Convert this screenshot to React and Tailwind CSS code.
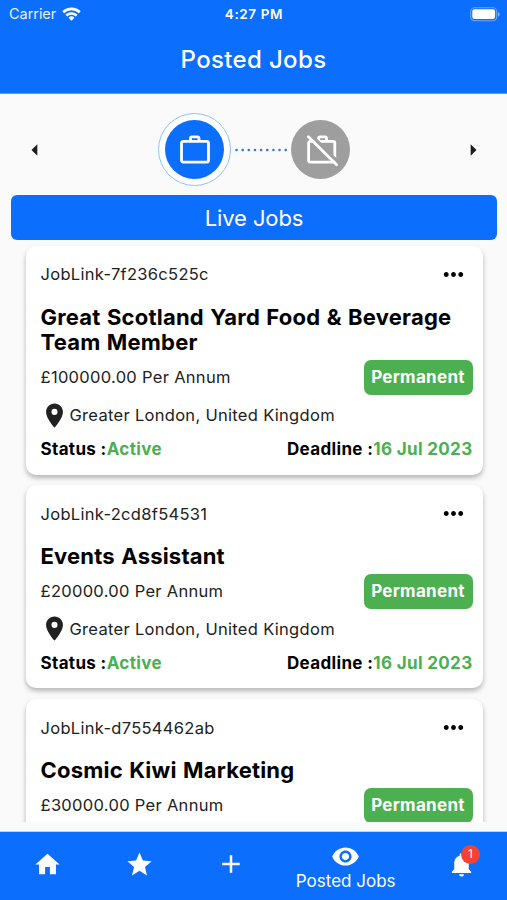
import {
  MdAdd,
  MdArrowLeft,
  MdArrowRight,
  MdHome,
  MdLocationOn,
  MdMoreHoriz,
  MdNotifications,
  MdStar,
  MdVisibility,
} from 'react-icons/md';

const jobs = [
  {
    id: 'JobLink-7f236c525c',
    title: 'Great Scotland Yard Food & Beverage Team Member',
    salary: '£100000.00 Per Annum',
    type: 'Permanent',
    location: 'Greater London, United Kingdom',
    status: 'Active',
    deadline: '16 Jul 2023',
  },
  {
    id: 'JobLink-2cd8f54531',
    title: 'Events Assistant',
    salary: '£20000.00 Per Annum',
    type: 'Permanent',
    location: 'Greater London, United Kingdom',
    status: 'Active',
    deadline: '16 Jul 2023',
  },
  {
    id: 'JobLink-d7554462ab',
    title: 'Cosmic Kiwi Marketing',
    salary: '£30000.00 Per Annum',
    type: 'Permanent',
  },
];

const LiveJobsIcon = () => (
  <svg width="36" height="36" viewBox="0 0 36 36" fill="none" stroke="currentColor" strokeWidth="2.8">
    <rect x="4.5" y="9.3" width="27" height="20.8" rx="1.8" />
    <path d="M13.5 9V6.3A1.5 1.5 0 0 1 15 4.8h5.500a1.5 1.5 0 0 1 1.5 1.5V9" />
  </svg>
);

const ClosedJobsIcon = () => (
  <svg width="36" height="36" viewBox="0 0 36 36" fill="none" stroke="currentColor" strokeWidth="2.8">
    <rect x="5.6" y="9.3" width="26.2" height="20.8" rx="1.8" />
    <path d="M15.5 9V6.3A1.5 1.5 0 0 1 17 4.8h5a1.5 1.5 0 0 1 1.5 1.5V9" />
    <path d="M7 2 36 31" stroke="#9e9e9e" strokeWidth="3.2" />
    <path d="M5.4 4.8 33.6 32.7" strokeLinecap="round" />
  </svg>
);

const StatusBar = () => (
  <div className="grid h-[26px] grid-cols-3 items-center pl-[9px] pr-[7px] pt-[2px] text-white">
    <div className="flex items-center gap-[6px]">
      <span className="text-[14.5px] tracking-[-0.05px] opacity-90">Carrier</span>
      <svg width="19" height="14" viewBox="0 0 19 14" fill="none">
        <path d="M1.2 5.2a12 12 0 0 1 16.6 0" stroke="currentColor" strokeWidth="2.7" />
        <path d="M4.3 8.5a7.6 7.6 0 0 1 10.4 0" stroke="currentColor" strokeWidth="2.5" />
        <path d="M9.5 13.8 6.5 10.8a4.3 4.3 0 0 1 6 0Z" fill="currentColor" />
      </svg>
    </div>
    <span className="pr-[1px] text-center text-[13.5px] font-semibold tracking-[0.6px]">4:27 PM</span>
    <svg className="justify-self-end" width="30" height="15" viewBox="0 0 30 15" fill="none">
      <rect x="0.7" y="0.7" width="26" height="13" rx="4" stroke="white" strokeOpacity="0.4" strokeWidth="1.1" />
      <rect x="2.3" y="2.3" width="22.8" height="9.6" rx="2.2" fill="white" />
      <path d="M28 5v4.6c1-.4 1.6-1.3 1.6-2.3S29 5.4 28 5Z" fill="white" fillOpacity="0.5" />
    </svg>
  </div>
);

const Stepper = () => (
  <div className="flex h-[101px] items-center justify-between pl-[21px] pr-[20px] pt-[10px] text-[#1c1c1c]">
    <MdArrowLeft size={28} />
    <div className="flex items-center">
      <div className="flex size-[73px] items-center justify-center rounded-full border border-[#8fc1f7] bg-white">
        <div className="flex size-[59px] items-center justify-center rounded-full bg-[#0c6efd] text-white">
          <LiveJobsIcon />
        </div>
      </div>
      <svg width="60" height="4" viewBox="0 0 60 4" fill="#2a78e4">
        {Array.from({ length: 9 }, (_, i) => (
          <circle key={i} cx={5.5 + i * 6.15} cy="2" r="1.3" />
        ))}
      </svg>
      <div className="flex size-[59px] items-center justify-center rounded-full bg-[#9e9e9e] text-white">
        <ClosedJobsIcon />
      </div>
    </div>
    <MdArrowRight size={28} />
  </div>
);

const JobCard = ({ job }) => (
  <div className="shrink-0 rounded-[10px] bg-white pb-[10.5px] pl-[15px] pr-[10px] pt-[14px] text-[16.5px] tracking-[0.3px] text-[#212121] shadow-[0_3px_5px_rgba(0,0,0,0.28)]">
    <div className="flex h-[30px] items-center justify-between pr-[5px]">
      <span>{job.id}</span>
      <MdMoreHoriz size={29} className="text-black" />
    </div>
    <h2 className="mt-[15px] text-[22px] font-bold leading-[25.5px] tracking-[0.2px] text-black [word-spacing:1px]">
      {job.title}
    </h2>
    <div className="mt-[4.5px] flex h-[35px] items-center justify-between">
      <span>{job.salary}</span>
      <span className="flex h-[35px] w-[109px] items-center justify-center rounded-[7px] bg-[#4caf50] pt-[1px] text-[17px] font-bold tracking-[0.3px] text-white">
        {job.type}
      </span>
    </div>
    {job.location && (
      <div className="flex h-[40px] items-center">
        <MdLocationOn size={29} className="-ml-[1px] mr-[1px] shrink-0" />
        <span>{job.location}</span>
      </div>
    )}
    {job.status && (
      <div className="flex h-[29px] items-center justify-between pt-[1px] text-[17px] font-bold tracking-[0.35px] text-black">
        <span>
          Status :<span className="text-[#4caf50]">{job.status}</span>
        </span>
        <span>
          Deadline :<span className="text-[#4caf50]">{job.deadline}</span>
        </span>
      </div>
    )}
  </div>
);

const BottomNav = () => (
  <nav className="grid h-[69px] grid-cols-[2fr_2fr_2fr_3fr_2fr] items-center border-t border-[#b9d2fa] bg-[#0c6efd] text-white">
    <MdHome size={29} className="mb-[4px] ml-[2px] justify-self-center" />
    <MdStar size={29} className="mb-[4px] ml-[2px] justify-self-center" />
    <MdAdd size={30} className="mb-[4px] ml-[1px] justify-self-center" />
    <div className="flex flex-col items-center">
      <MdVisibility size={29} />
      <span className="text-[17px] leading-[20px]">Posted Jobs</span>
    </div>
    <div className="relative mb-[4px] ml-[1px] justify-self-center">
      <MdNotifications size={29} />
      <span className="absolute -right-[4px] -top-[5px] flex size-[19px] items-center justify-center rounded-full bg-[#f44336] text-[12px] leading-none">
        1
      </span>
    </div>
  </nav>
);

export default function App() {
  return (
    <div className="flex h-[900px] w-[507px] flex-col overflow-hidden bg-[#fafafa] font-['Inter',sans-serif]">
      <header className="h-[94px] shrink-0 border-b border-[#5a9dfc] bg-[#0c6efd]">
        <StatusBar />
        <h1 className="pt-[16px] text-center text-[24px] font-medium leading-[36px] tracking-[0.35px] text-white">
          Posted Jobs
        </h1>
      </header>
      <Stepper />
      <div className="ml-[11px] mr-[10px] flex h-[45px] shrink-0 items-center justify-center rounded-[6px] bg-[#0c6efd] pt-[1px] text-[22px] tracking-[-0.1px] text-white">
        Live Jobs
      </div>
      <main className="flex h-[582px] shrink-0 flex-col gap-[10.4px] overflow-hidden pl-[25.5px] pr-[24.5px] pt-[5.6px]">
        {jobs.map((job) => (
          <JobCard key={job.id} job={job} />
        ))}
      </main>
      <div className="h-[9px] shrink-0" />
      <BottomNav />
    </div>
  );
}
